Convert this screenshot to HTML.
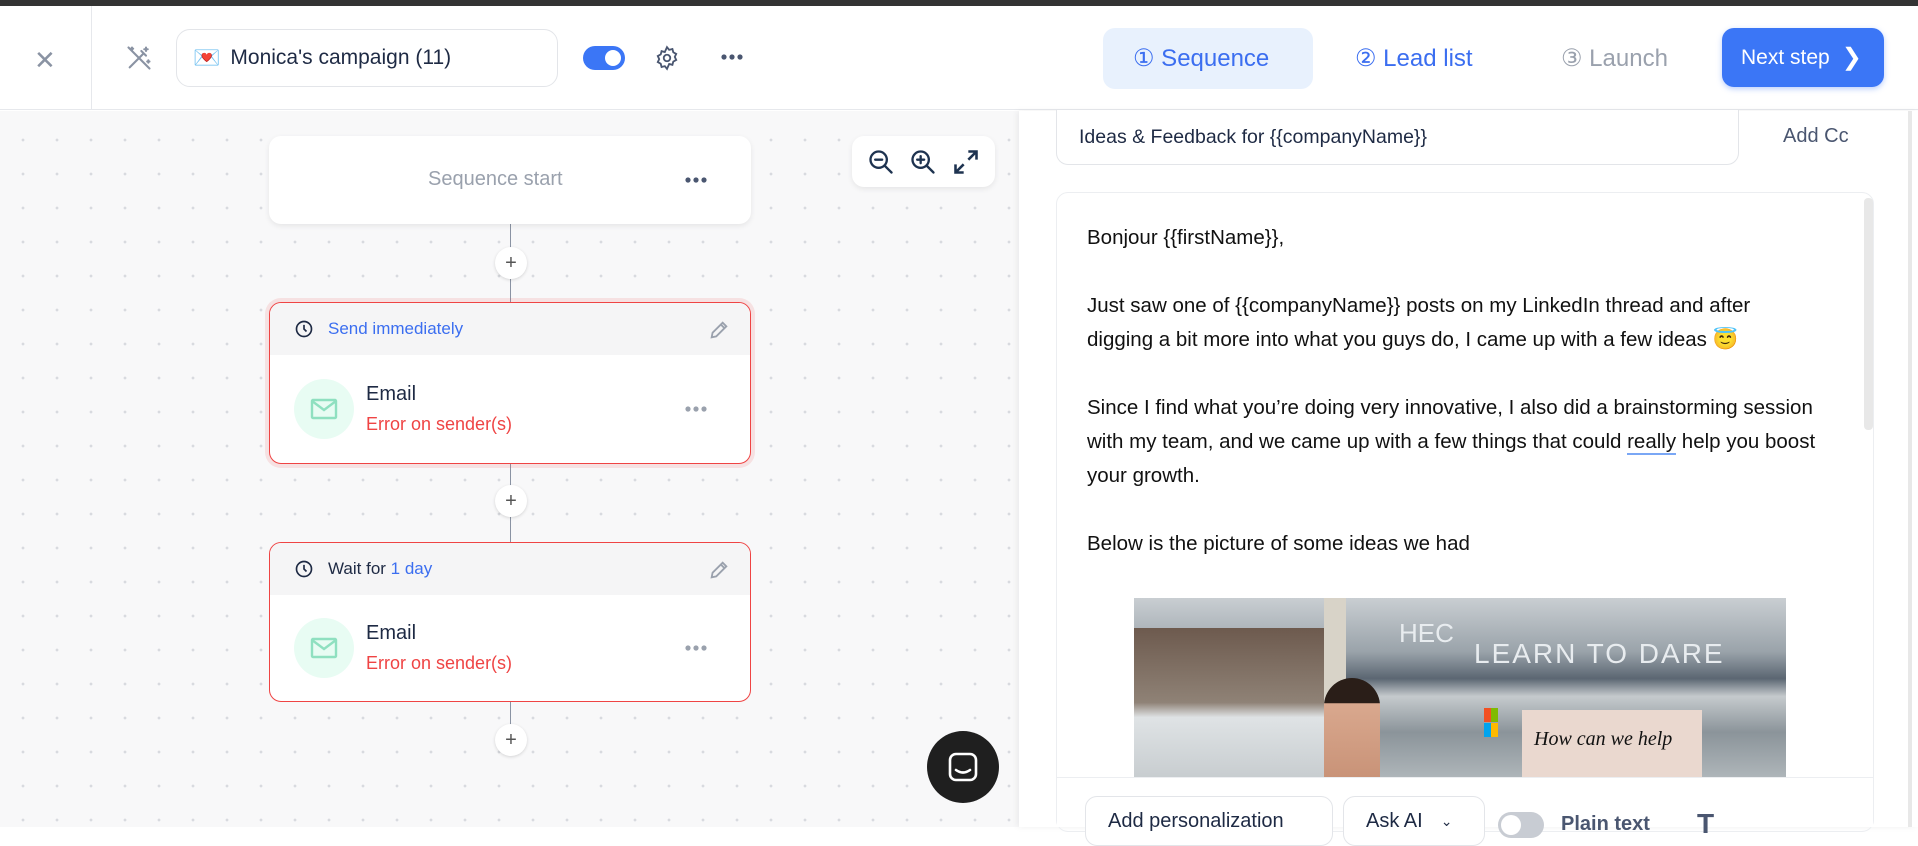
<!DOCTYPE html>
<html><head><meta charset="utf-8">
<style>
*{box-sizing:border-box;margin:0;padding:0}
body{width:1918px;height:827px;overflow:hidden;font-family:"Liberation Sans",sans-serif;background:#fff;position:relative;color:#1e2a44}
.abs{position:absolute}
.topbar{left:0;top:0;width:1918px;height:6px;background:#333}
.header{left:0;top:6px;width:1918px;height:104px;background:#fff;border-bottom:1px solid #e6e8ec}
.canvas{left:0;top:111px;width:1019px;height:716px;background-color:#f8f8f9;background-image:radial-gradient(circle,#d8dadf 1.2px,transparent 1.6px);background-size:34px 34px;background-position:6px 12px}
.card{background:#fff;border-radius:12px;box-shadow:0 2px 6px rgba(0,0,0,.08)}
.step{border:1.5px solid #ef4444;border-radius:12px;background:#fff;overflow:hidden}
.step .hd{height:52px;background:#f5f5f6;display:flex;align-items:center;padding-left:24px;font-size:17px}
.plus{width:32px;height:32px;border-radius:50%;background:#fff;box-shadow:0 1px 3px rgba(0,0,0,.15);color:#555;font-size:20px;display:flex;align-items:center;justify-content:center;line-height:1}
.body{font-size:20.5px;color:#111;line-height:34px}
.btn{border:1px solid #e3e5e9;border-radius:12px;background:#fff;font-size:20px;color:#1e2a44;display:flex;align-items:center;padding-left:22px}
</style></head><body>
<div class="abs topbar"></div>
<div class="abs header"></div>
<div class="abs" style="left:34px;top:45px;font-size:26px;color:#8a93a3">✕</div>
<div class="abs" style="left:91px;top:6px;width:1px;height:104px;background:#e6e8ec"></div>
<svg class="abs" style="left:125px;top:44px" width="28" height="28" viewBox="0 0 24 24" fill="none" stroke="#8a93a3" stroke-width="1.8" stroke-linecap="round"><path d="M4 20L16 8M14 6l4 4M18 3v3M16.5 4.5h3M6 3v2M5 4h2M20 14v2M19 15h2"/><path d="M3 3l18 18"/></svg>
<div class="abs" style="left:176px;top:29px;width:382px;height:58px;border:1px solid #e3e5e9;border-radius:14px;display:flex;align-items:center;padding-left:16px;font-size:21px;color:#1e2a44"><span style="font-size:22px;margin-right:10px">💌</span>Monica's campaign (11)</div>
<div class="abs" style="left:583px;top:46px;width:42px;height:24px;border-radius:12px;background:#3b76f6"><div style="position:absolute;right:4px;top:4px;width:16px;height:16px;border-radius:50%;background:#fff"></div></div>
<svg class="abs" style="left:654px;top:45px" width="26" height="26" viewBox="0 0 24 24" fill="none" stroke="#4a5670" stroke-width="1.7"><circle cx="12" cy="12" r="3"/><path d="M12 2l2 2.5 3-.8.8 3 2.7 1.5-1.3 2.8 1.3 2.8-2.7 1.5-.8 3-3-.8L12 22l-2-2.5-3 .8-.8-3L3.5 15.8 4.8 13 3.5 10.2 6.2 8.7l.8-3 3 .8z"/></svg>
<svg class="abs" style="left:720px;top:53px" width="24" height="8" viewBox="0 0 24 8" fill="#4a5670"><circle cx="4" cy="4" r="2.6"/><circle cx="12" cy="4" r="2.6"/><circle cx="20" cy="4" r="2.6"/></svg>
<div class="abs" style="left:1103px;top:28px;width:210px;height:61px;background:#e8f1fd;border-radius:12px"></div>
<div class="abs" style="left:1133px;top:44px;font-size:24px;color:#3b6ef0">① Sequence</div>
<div class="abs" style="left:1355px;top:44px;font-size:24px;color:#3b6ef0">② Lead list</div>
<div class="abs" style="left:1561px;top:44px;font-size:24px;color:#9aa1ad">③ Launch</div>
<div class="abs" style="left:1722px;top:28px;width:162px;height:59px;background:#3b76f6;border-radius:12px;box-shadow:0 2px 6px rgba(59,118,246,.35);color:#fff;font-size:21px;display:flex;align-items:center;padding-left:19px">Next step<span style="margin-left:12px;font-size:24px">❯</span></div>

<div class="abs canvas"></div>
<div class="abs" style="left:510px;top:224px;width:1px;height:530px;background:#8a93a3"></div>
<div class="abs card" style="left:269px;top:136px;width:482px;height:88px"></div>
<div class="abs" style="left:428px;top:168px;font-size:20px;color:#9aa1ad">Sequence start</div>
<svg class="abs" style="left:684px;top:176px" width="24" height="8" viewBox="0 0 24 8" fill="#4a5670"><circle cx="4" cy="4" r="2.6"/><circle cx="12" cy="4" r="2.6"/><circle cx="20" cy="4" r="2.6"/></svg>
<div class="abs card" style="left:852px;top:136px;width:143px;height:51px;display:flex;align-items:center;justify-content:space-around;padding:0 8px">
<svg width="28" height="28" viewBox="0 0 24 24" fill="none" stroke="#1e3350" stroke-width="2" stroke-linecap="round"><circle cx="10" cy="10" r="7"/><path d="M15 15l6 6M7 10h6"/></svg>
<svg width="28" height="28" viewBox="0 0 24 24" fill="none" stroke="#1e3350" stroke-width="2" stroke-linecap="round"><circle cx="10" cy="10" r="7"/><path d="M15 15l6 6M7 10h6M10 7v6"/></svg>
<svg width="28" height="28" viewBox="0 0 24 24" fill="none" stroke="#1e3350" stroke-width="2.2"><path d="M14 3h7v7M21 3l-7 7M10 21H3v-7M3 21l7-7"/></svg>
</div>
<div class="abs plus" style="left:495px;top:247px">+</div>
<div class="abs plus" style="left:495px;top:485px">+</div>
<div class="abs plus" style="left:495px;top:724px">+</div>

<div class="abs step" style="left:269px;top:302px;width:482px;height:162px;box-shadow:0 0 0 4px rgba(239,68,68,.12)">
<div class="hd"><svg width="20" height="20" viewBox="0 0 24 24" fill="none" stroke="#1e2a44" stroke-width="2"><circle cx="12" cy="12" r="9"/><path d="M12 7v5l3 3"/></svg><span style="margin-left:14px;color:#3b6ef0">Send immediately</span>
<svg style="position:absolute;left:438px;top:16px" width="22" height="22" viewBox="0 0 24 24" fill="none" stroke="#9aa1ad" stroke-width="2"><path d="M4 20l1-5L16 4l4 4L9 19z M14 6l4 4"/></svg></div>
</div>
<div class="abs step" style="left:269px;top:542px;width:482px;height:160px">
<div class="hd"><svg width="20" height="20" viewBox="0 0 24 24" fill="none" stroke="#1e2a44" stroke-width="2"><circle cx="12" cy="12" r="9"/><path d="M12 7v5l3 3"/></svg><span style="margin-left:14px">Wait for <span style="color:#3b6ef0">1 day</span></span>
<svg style="position:absolute;left:438px;top:16px" width="22" height="22" viewBox="0 0 24 24" fill="none" stroke="#9aa1ad" stroke-width="2"><path d="M4 20l1-5L16 4l4 4L9 19z M14 6l4 4"/></svg></div>
</div>
<div class="abs" style="left:294px;top:379px;width:60px;height:60px;border-radius:50%;background:#e8fcf3"></div>
<svg class="abs" style="left:310px;top:398px" width="28" height="22" viewBox="0 0 28 22" fill="none" stroke="#8fe0c0" stroke-width="2.4"><rect x="2" y="2" width="24" height="18" rx="1"/><path d="M2 3l12 9 12-9"/></svg>
<div class="abs" style="left:366px;top:383px;font-size:20px;color:#1e2a44">Email</div>
<div class="abs" style="left:366px;top:414px;font-size:18px;color:#ef4444">Error on sender(s)</div>
<svg class="abs" style="left:684px;top:405px" width="24" height="8" viewBox="0 0 24 8" fill="#9aa1ad"><circle cx="4" cy="4" r="2.6"/><circle cx="12" cy="4" r="2.6"/><circle cx="20" cy="4" r="2.6"/></svg>
<div class="abs" style="left:294px;top:618px;width:60px;height:60px;border-radius:50%;background:#e8fcf3"></div>
<svg class="abs" style="left:310px;top:637px" width="28" height="22" viewBox="0 0 28 22" fill="none" stroke="#8fe0c0" stroke-width="2.4"><rect x="2" y="2" width="24" height="18" rx="1"/><path d="M2 3l12 9 12-9"/></svg>
<div class="abs" style="left:366px;top:622px;font-size:20px;color:#1e2a44">Email</div>
<div class="abs" style="left:366px;top:653px;font-size:18px;color:#ef4444">Error on sender(s)</div>
<svg class="abs" style="left:684px;top:644px" width="24" height="8" viewBox="0 0 24 8" fill="#9aa1ad"><circle cx="4" cy="4" r="2.6"/><circle cx="12" cy="4" r="2.6"/><circle cx="20" cy="4" r="2.6"/></svg>
<div class="abs" style="left:927px;top:731px;width:72px;height:72px;border-radius:50%;background:#1f1f1f"></div>
<svg class="abs" style="left:947px;top:751px" width="32" height="32" viewBox="0 0 32 32" fill="none" stroke="#fff" stroke-width="2.6" stroke-linecap="round"><rect x="3" y="3" width="26" height="26" rx="6"/><path d="M9 19q7 5 14 0"/></svg>

<div class="abs" style="left:1019px;top:111px;width:899px;height:716px;background:#fff;box-shadow:-2px 0 6px rgba(0,0,0,.06)"></div>
<div class="abs btn" style="left:1056px;top:110px;width:683px;height:55px;border-top:none;border-radius:0 0 12px 12px;font-size:19.5px">Ideas &amp; Feedback for {{companyName}}</div>
<div class="abs" style="left:1783px;top:125px;font-size:20px;color:#4a5670">Add Cc</div>
<div class="abs" style="left:1056px;top:192px;width:818px;height:640px;border:1px solid #eceef1;border-radius:12px"></div>
<div class="abs" style="left:1864px;top:198px;width:9px;height:232px;background:#e8e8e8;border-radius:4px"></div>
<div class="abs body" style="left:1087px;top:221px;width:730px">
<div>Bonjour {{firstName}},</div>
<div style="height:34px"></div>
<div>Just saw one of {{companyName}} posts on my LinkedIn thread and after digging a bit more into what you guys do, I came up with a few ideas 😇</div>
<div style="height:34px"></div>
<div>Since I find what you’re doing very innovative, I also did a brainstorming session with my team, and we came up with a few things that could <span style="border-bottom:2px solid #7aa7f5">really</span> help you boost your growth.</div>
<div style="height:34px"></div>
<div>Below is the picture of some ideas we had</div>
</div>
<div class="abs" style="left:1134px;top:598px;width:652px;height:179px;overflow:hidden;background:linear-gradient(180deg,#c9ced2 0%,#9aa3aa 30%,#5b6672 45%,#c5cacd 55%,#8b949a 75%,#aeb5b9 100%)">
<div class="abs" style="left:0;top:30px;width:200px;height:149px;background:linear-gradient(180deg,#6d5a4e,#8f8276 50%,#dfe3e5 60%,#c8cdd0)"></div>
<div class="abs" style="left:190px;top:0;width:22px;height:179px;background:#d8d3c8"></div>
<div class="abs" style="left:340px;top:40px;font-size:28px;color:#e8ecef;letter-spacing:2px">LEARN TO DARE</div>
<div class="abs" style="left:265px;top:20px;font-size:26px;color:#e8ecef">HEC</div>
<div class="abs" style="left:350px;top:110px;width:14px;height:14px;background:linear-gradient(90deg,#f25022 50%,#7fba00 50%)"></div>
<div class="abs" style="left:350px;top:125px;width:14px;height:14px;background:linear-gradient(90deg,#00a4ef 50%,#ffb900 50%)"></div>
<div class="abs" style="left:190px;top:80px;width:56px;height:99px;border-radius:28px 28px 0 0;background:linear-gradient(180deg,#2a1e18 0,#2a1e18 25%,#d9a88e 26%,#c99378 100%)"></div>
<div class="abs" style="left:388px;top:112px;width:180px;height:67px;background:#ead8cf"></div>
<div class="abs" style="left:400px;top:130px;font-size:20px;font-style:italic;color:#111;font-family:'Liberation Serif',serif">How can we help</div>
</div>
<div class="abs" style="left:1057px;top:777px;width:816px;height:50px;background:#fff;border-top:1px solid #eceef1"></div>
<div class="abs btn" style="left:1085px;top:796px;width:248px;height:50px;padding-left:22px">Add personalization</div>
<div class="abs btn" style="left:1343px;top:796px;width:142px;height:50px;padding-left:22px">Ask AI <span style="margin-left:18px;font-size:14px">⌄</span></div>
<div class="abs" style="left:1498px;top:812px;width:46px;height:26px;border-radius:13px;background:#c8ccd3"><div style="position:absolute;left:3px;top:3px;width:20px;height:20px;border-radius:50%;background:#fff"></div></div>
<div class="abs" style="left:1561px;top:813px;font-size:20px;font-weight:bold;color:#4a5670">Plain text</div>
<div class="abs" style="left:1697px;top:808px;font-size:28px;font-weight:bold;color:#4a5670">T</div>
<div class="abs" style="left:1908px;top:111px;width:4px;height:716px;background:#e8e8e8"></div>
</body></html>
